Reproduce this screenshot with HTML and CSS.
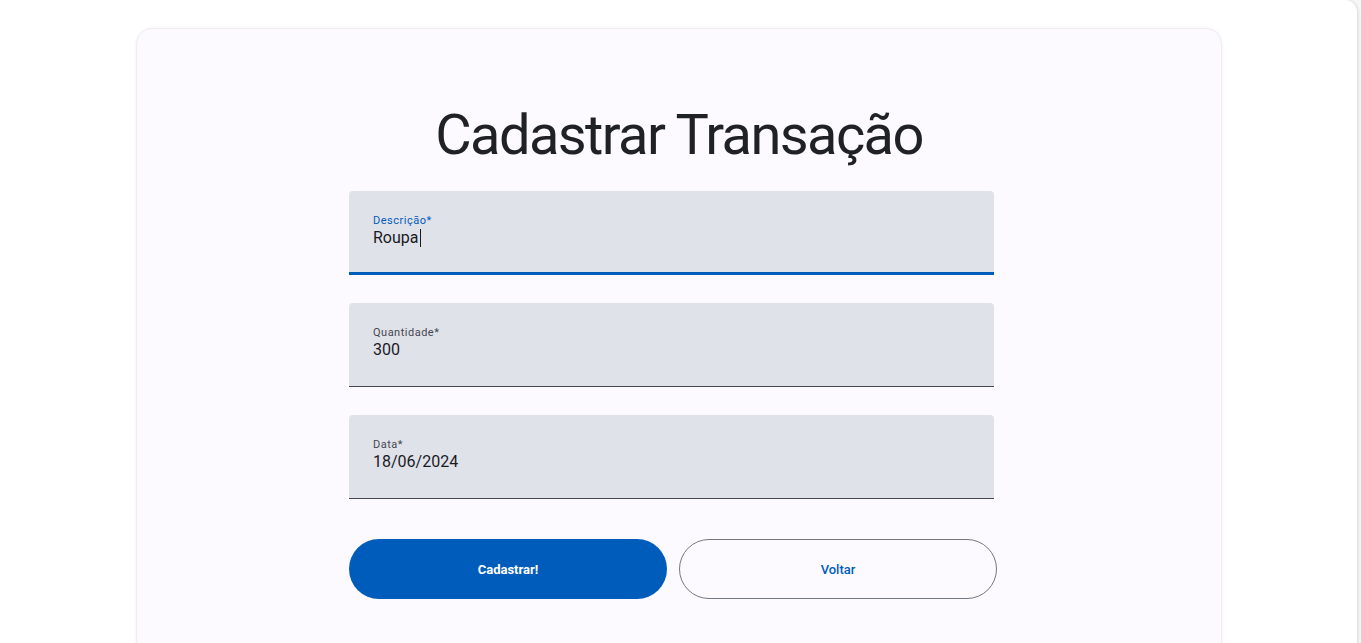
FILE: index.html
```html
<!DOCTYPE html>
<html lang="pt-BR">
<head>
<meta charset="utf-8">
<title>Cadastrar Transação</title>
<link rel="stylesheet" href="styles.css">
</head>
<body>
<div class="shell">
  <main class="card">
    <h1 class="title">Cadastrar Transação</h1>
    <form class="form">
      <div class="field field-focused">
        <span class="label">Descrição*</span>
        <span class="value">Roupa<span class="caret"></span></span>
      </div>
      <div class="field">
        <span class="label">Quantidade*</span>
        <span class="value">300</span>
      </div>
      <div class="field">
        <span class="label">Data*</span>
        <span class="value">18/06/2024</span>
      </div>
      <div class="actions">
        <button type="button" class="btn btn-primary">Cadastrar!</button>
        <button type="button" class="btn btn-outline">Voltar</button>
      </div>
    </form>
  </main>
</div>
</body>
</html>
```
FILE: styles.css
```css
* { box-sizing: border-box; }
html, body { margin: 0; height: 100%; overflow: hidden; }
body {
  background: #f6f6f6;
  font-family: Roboto, "Liberation Sans", Arial, sans-serif;
}
.shell {
  margin-right: 4px;
  min-height: 800px;
  background: #ffffff;
  border-radius: 0 12px 12px 12px;
  box-shadow: 1px 0 3px rgba(0,0,0,0.12);
  padding: 28px 135px 0 136px;
}
.card {
  background: #fcfaff;
  border: 1px solid #efedf2;
  border-radius: 16px;
  box-shadow: 0 0 3px rgba(0,0,0,0.06);
  min-height: 760px;
  display: flex;
  flex-direction: column;
  align-items: center;
  padding-top: 73px;
}
.title {
  margin: 0;
  font-weight: 400;
  font-size: 56px;
  line-height: 67px;
  color: #1f2125;
  letter-spacing: -1.6px;
}
.form {
  margin-top: 22px;
  width: 648px;
  margin-left: -12px;
  display: flex;
  flex-direction: column;
  gap: 28px;
}
.field {
  width: 645px;
  height: 84px;
  background: #e0e2ea;
  border-radius: 4px 4px 0 0;
  border-bottom: 1px solid #44474e;
  padding: 23px 24px 0;
  display: flex;
  flex-direction: column;
}
.field-focused {
  border-bottom: 3px solid #005cbb;
}
.label {
  font-size: 11px;
  line-height: 14px;
  letter-spacing: 0.5px;
  color: #44474e;
}
.field-focused .label { color: #005cbb; }
.value {
  font-size: 16px;
  line-height: 24px;
  margin-top: -2px;
  color: #1a1b1f;
  letter-spacing: 0;
  display: flex;
  align-items: center;
}
.caret {
  display: inline-block;
  width: 1px;
  height: 18px;
  background: #1a1b1f;
  margin-left: 1px;
}
.actions {
  margin-top: 12px;
  display: flex;
  gap: 12px;
}
.btn {
  width: 318px;
  height: 60px;
  border-radius: 30px;
  font-family: Roboto, "Liberation Sans", Arial, sans-serif;
  font-size: 13px;
  cursor: pointer;
}
.btn-primary {
  background: #005cbb;
  color: #ffffff;
  border: none;
  font-weight: 700;
}
.btn-outline {
  background: transparent;
  color: #005cbb;
  border: 1px solid #74777f;
  font-weight: 500;
}
```
